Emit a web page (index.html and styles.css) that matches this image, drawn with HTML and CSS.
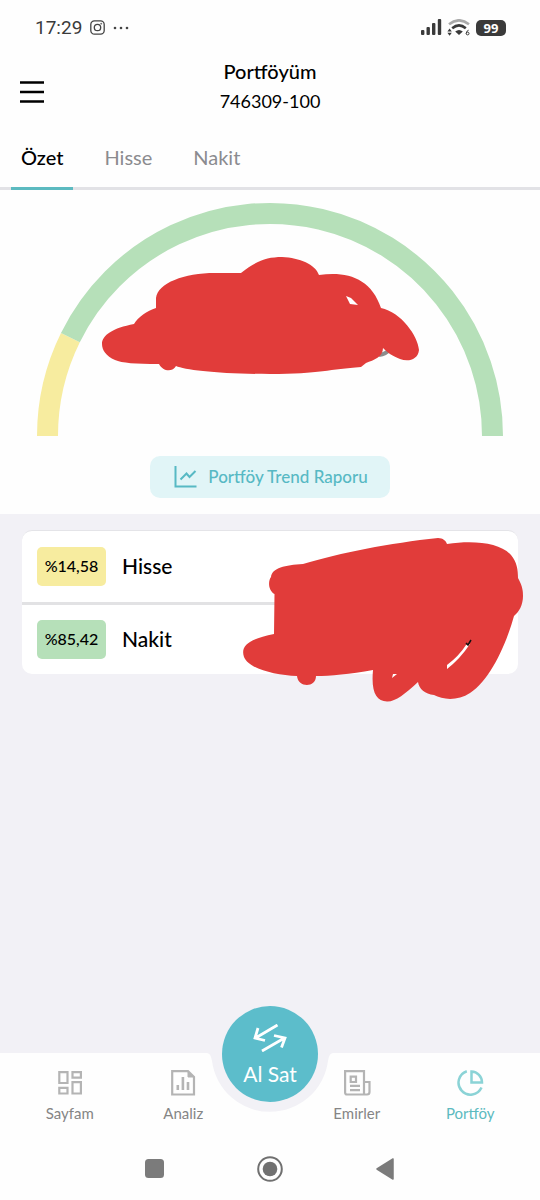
FILE: index.html
```html
<!DOCTYPE html>
<html lang="tr">
<head>
<meta charset="utf-8">
<meta name="viewport" content="width=device-width, initial-scale=1">
<title>Portföyüm</title>
<link rel="stylesheet" href="styles.css">
</head>
<body class="app">
<div class="status">
  <span class="status-time">17:29</span>
  <svg class="status-insta" width="15" height="15" viewBox="0 0 15 15" fill="none" stroke="#444" stroke-width="1.3"><rect x=".8" y=".8" width="13.4" height="13.4" rx="3.6"/><circle cx="7.5" cy="7.5" r="3.2"/><circle cx="11.2" cy="3.7" r=".5" fill="#444" stroke-width=".6"/></svg>
  <svg width="16" height="4" viewBox="0 0 16 4" fill="#444"><circle cx="2" cy="2" r="1.3"/><circle cx="8" cy="2" r="1.3"/><circle cx="14" cy="2" r="1.3"/></svg>
  <div class="status-right">
    <svg width="21" height="17" viewBox="0 0 21 17" fill="#3a3a3a"><rect x="0" y="11" width="3.4" height="5" rx="1"/><rect x="5.5" y="8" width="3.4" height="8" rx="1"/><rect x="11" y="4" width="3.4" height="12" rx="1"/><rect x="16.8" y="0" width="3.4" height="16" rx="1"/></svg>
    <svg width="24" height="17" viewBox="0 0 24 17"><path d="M2 5.2Q12-2.6 22 5.2" fill="none" stroke="#aaa" stroke-width="2.6"/><path d="M5.2 9.3Q12 3.6 18.8 9.3" fill="none" stroke="#3a3a3a" stroke-width="2.6"/><path d="M8.2 12.6Q12 9.4 15.8 12.6L12 16z" fill="#3a3a3a"/><path d="M.4 12.6 2.6 9.4 4.8 12.6zM.4 13.8 2.6 16.8 4.8 13.8z" fill="#3a3a3a"/><path d="M21.6 11.2Q19.2 12 19.2 14.5" fill="none" stroke="#3a3a3a" stroke-width="1"/><circle cx="20.6" cy="14.5" r="1.4" fill="none" stroke="#3a3a3a"/></svg>
    <span class="battery">99</span>
  </div>
</div>
<header class="header">
  <button class="menu" aria-label="Menü"><svg width="24" height="22" viewBox="0 0 24 22" fill="none" stroke="#000" stroke-width="2.6"><path d="M0 1.5H24M0 11H24M0 20.5H24"/></svg></button>
  <div class="heading"><h1 class="title">Portföyüm</h1><p class="account">746309-100</p></div>
</header>
<nav class="tabs">
  <button class="tab tab-active">Özet</button><button class="tab">Hisse</button><button class="tab">Nakit</button>
</nav>
<main class="main">
  <section class="summary">
    <svg class="gauge" viewBox="36 202 468 234" role="img" aria-label="Portföy dağılımı">
      <path d="M47.500 436A222.500 222.500 0 0 1 70.400 337.600" fill="none" stroke="#f7ec9f" stroke-width="21"/>
      <path d="M70.400 337.600A222.500 222.500 0 0 1 492.500 436" fill="none" stroke="#b6e0b9" stroke-width="21"/>
      <path d="M379 355Q386 354 389 350" fill="none" stroke="#8c8c8c" stroke-width="4"/>
      <path fill="#e13c3a" d="M102 344C102 335 113 328 134 324C138 317 147 311 156 308V298C158 283 184 273 215 273H241C256 261 267 257 282 257C300 258 315 264 319 275C347 271 371 278 381 308C401 312 418 336 419 350C418 360 408 362 400 359C392 356 387 352 383 348C383 357 374 360 366 363L361 367C330 369 320 374 270 374C220 374 185 370 176 366C173 372 163 372 159 364C135 364 122 363 115 360C106 356 102 350 102 344Z"/>
      <path d="M346 296 351 298 358 305 350 304Z" fill="#fff"/>
    </svg>
    <button class="report"><svg width="24" height="22" viewBox="0 0 24 22" fill="none" stroke="#57b9c4" stroke-width="2"><path d="M1.500 0V20.500H22.500M6.500 13.500 12.500 7.500 15.500 11 21.500 5"/></svg>Portföy Trend Raporu</button>
  </section>
  <section class="card">
    <div class="row"><span class="share share-stock">%14,58</span><span class="name">Hisse</span></div>
    <div class="row"><span class="share share-cash">%85,42</span><span class="name">Nakit</span></div>
    <svg class="cover" width="285" height="170" viewBox="240 535 285 170" aria-hidden="true">
      <path fill="#e13c3a" d="M274 634 274.500 594C268 590 268 581 271 577C272 568 285 565 303 564C340 553 390 543 438 538C443 538 446 541 447 544C475 540 500 543 511 555C517 562 518 570 518 578C523 587 523 592 523 596C523 605 519 612 514 616C506 645 490 680 470 693C458 701 443 700 434 695C425 694 419 689 418 682C405 694 395 702 387 701.500C376 701 371 692 373 670C350 674 330 676 316 676C316 688 298 688 297 676C275 675 249 669 244 657C240 645 250 639 274 634Z"/>
      <path d="M447 665Q459 656 466 645L470 644Q460 659 447 669ZM393 674H397L392 678Z" fill="#fff"/>
      <path d="M466 643 468 645 471 640" fill="none" stroke="#111" stroke-width="1.500"/>
    </svg>
  </section>
</main>
<nav class="bottom">
  <svg class="notch" width="126" height="59" viewBox="0 0 126 59"><path d="M0 0C4 1 4 4 5 8A58.500 58.500 0 0 0 121 8C122 4 122 1 126 0Z" fill="#f2f1f6"/></svg>
  <a class="item" href="#"><svg width="26" height="28" viewBox="0 0 26 28" fill="none" stroke="#b4b4b4" stroke-width="2.200"><path d="M2.300 3.100H10.500V14H2.300zM15.500 3.100H23.900V8.700H15.500zM15.500 13.100H23.900V24.500H15.500zM2.300 18.900H10.500V24.500H2.300z"/></svg>Sayfam</a>
  <a class="item" href="#"><svg width="26" height="28" viewBox="0 0 26 28" fill="none" stroke="#b4b4b4" stroke-width="2.200"><path d="M2.200 2.100H18L24 8V25.500H2.200z"/><path d="M18 2.500V8H23.500z" fill="#b4b4b4" stroke-width="1"/><path d="M7.800 16V21M12.900 8V21M18 13V21" stroke-width="2.600"/></svg>Analiz</a>
  <button class="trade"><svg width="34" height="28" viewBox="0 0 34 28" fill="none" stroke="#fff" stroke-width="2.800"><path d="M24.500 1 2.500 14M5 4 2 14 12 16.500M9 27 31.500 14M21 11.500 32 14 28.500 23.500"/></svg>Al Sat</button>
  <a class="item" href="#"><svg width="28" height="28" viewBox="0 0 28 28" fill="none" stroke="#b4b4b4" stroke-width="2.200"><path d="M2.100 2.100H21V25.500H4Q2.100 25.500 2.100 23.500zM21 13H26.500V23Q26.500 25.500 24 25.500H21"/><path d="M7.700 7.600H13V13H7.700zM7 16.800H17M7 21.200H17"/></svg>Emirler</a>
  <a class="item item-active" href="#"><svg width="28" height="28" viewBox="0 0 28 28" fill="none" stroke="#8bd3d6" stroke-width="2.500"><path d="M10.800 2.200A12 12 0 1 0 25.500 18.500M15.500 2.500V13.500H26A11 11 0 0 0 15.500 2.500z"/></svg>Portföy</a>
</nav>
<div class="system">
  <button class="key" aria-label="Son uygulamalar"><svg width="20" height="20"><rect width="19" height="19" rx="3.500" fill="#7b7b7b"/></svg></button>
  <button class="key" aria-label="Ana ekran"><svg width="26" height="26"><circle cx="13" cy="13" r="11.800" fill="none" stroke="#707070" stroke-width="2"/><circle cx="13" cy="13" r="7.300" fill="#707070"/></svg></button>
  <button class="key" aria-label="Geri"><svg width="20" height="24"><path d="M18 2V22L2 12z" fill="#7b7b7b" stroke="#7b7b7b" stroke-width="1.500" stroke-linejoin="round"/></svg></button>
</div>
</body>
</html>
```
FILE: styles.css
```css
* { box-sizing: border-box; }
.app {
  margin: 0;
  min-height: 100vh;
  display: flex;
  flex-direction: column;
  background: #fefefe;
  color: #000;
  font-family: Lato, "Open Sans", sans-serif;
}
button { border: 0; padding: 0; background: none; color: inherit; font: inherit; }
a { color: inherit; text-decoration: none; }
svg { display: block; flex: none; }

.status {
  display: flex;
  align-items: center;
  gap: 8px;
  height: 55px;
  padding: 0 34px 0 35px;
  color: #3a3a3a;
  font: 19px Roboto, sans-serif;
}
.status-right { display: flex; align-items: center; gap: 5px; margin-left: auto; }
.battery {
  width: 30px;
  border-radius: 5px;
  background: #3a3a3a;
  color: #fff;
  font: bold 13px/16px "Open Sans", sans-serif;
  text-align: center;
}

.header {
  display: grid;
  grid-template-columns: 24px 1fr 24px;
  align-items: start;
  padding: 1px 20px 0;
  height: 72px;
}
.menu { padding-top: 25px; }
.heading { text-align: center; }
.title, .account { margin: 0; line-height: 30px; }
.title { font-size: 20px; font-weight: 500; }
.account { font-size: 18px; }

.tabs { display: flex; gap: 21px; height: 63px; padding: 0 11px; border-bottom: 3px solid #e2e2e6; }
.tab { height: 63px; padding: 0 10px; border-bottom: 3px solid transparent; color: #8b8b8f; font-size: 20px; }
.tab-active { color: #000; border-color: #5cbac0; font-weight: 500; }

.main { flex: 1; background: #f2f1f6; }
.summary {
  display: flex;
  flex-direction: column;
  align-items: center;
  gap: 20px;
  padding: 12px 36px 16px;
  background: #fefefe;
}
.gauge { width: 100%; }
.report {
  display: flex;
  align-items: center;
  gap: 10px;
  height: 42px;
  padding: 0 22px 1px 24px;
  border-radius: 10px;
  background: #e1f5f7;
  color: #57b9c4;
  font-size: 17px;
  font-weight: 500;
}

.card {
  position: relative;
  margin: 16px 22px;
  border-top: 1px solid #e4e4e8;
  border-radius: 10px;
  background: #fff;
}
.row { display: flex; align-items: center; gap: 16px; height: 71px; padding: 0 15px; font-size: 21px; font-weight: 500; }
.row + .row { height: 72px; border-top: 3px solid #e2e2e4; }
.name { padding-bottom: 2px; }
.share { width: 69px; padding-bottom: 2px; border-radius: 5px; font-size: 16px; line-height: 37px; text-align: center; }
.share-stock { background: #f7ec9f; }
.share-cash { background: #b6e0b9; }
.cover { position: absolute; right: -7px; top: 4px; }

.bottom {
  position: relative;
  display: grid;
  grid-template-columns: 1fr 1fr 60px 1fr 1fr;
  padding: 0 13px;
  height: 84px;
  background: #fefefe;
}
.item {
  position: relative;
  display: flex;
  flex-direction: column;
  align-items: center;
  gap: 6px;
  padding-top: 16px;
  color: #858585;
  font-size: 15px;
  line-height: 20px;
}
.item-active { color: #5cbac0; }
.notch { position: absolute; top: 0; left: calc(50% - 63px); }
.trade {
  position: relative;
  display: flex;
  flex-direction: column;
  align-items: center;
  gap: 8px;
  width: 96px;
  height: 96px;
  margin: -47px -18px 0;
  padding-top: 18px;
  border-radius: 50%;
  background: #5cbdcb;
  color: #fff;
  font-size: 21px;
  line-height: 28px;
}

.system { display: flex; align-items: center; justify-content: center; gap: 20px; height: 63px; }
.key { display: grid; place-items: center; width: 95px; height: 63px; }
```
